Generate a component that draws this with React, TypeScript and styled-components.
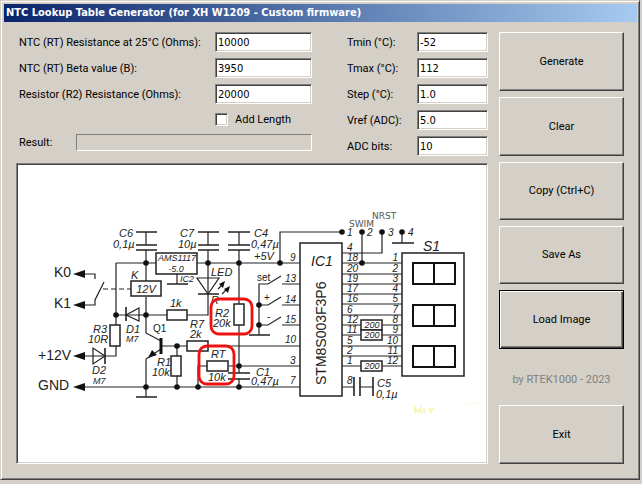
import React, { useState } from "react";
import styled, { createGlobalStyle, css } from "styled-components";

const face = "#d4d0c8";
const shadow = "#808080";
const dark = "#404040";

const GlobalStyle = createGlobalStyle`
  * { box-sizing: border-box; }
  body {
    margin: 0;
    background: ${face};
    font: 11px/14px Roboto, "Liberation Sans", sans-serif;
    color: #000;
  }
`;

const Window = styled.main`
  margin: 0 2px 4px 0;
  padding: 2px;
  background: ${face};
  border: 1px solid;
  border-color: ${face} ${dark} ${dark} ${face};
  box-shadow: inset 1px 1px #fff, inset -1px -1px ${shadow};
`;

const TitleBar = styled.h1`
  margin: 1px 0 0 1px;
  padding: 0 2px;
  height: 18px;
  font: bold 11px/18px "DejaVu Sans Condensed", "DejaVu Sans", sans-serif;
  color: #fff;
  white-space: nowrap;
  background: linear-gradient(90deg, #0a246a, #a6caf0);
`;

const Content = styled.div`
  display: flex;
  gap: 11px;
  padding: 10px 13px 13px;
`;

const Workspace = styled.div`
  flex: 1;
  min-width: 0;
  display: flex;
  flex-direction: column;
  gap: 7px;
`;

const Form = styled.form`
  display: flex;
  justify-content: space-between;
  padding-left: 3px;
`;

const Fields = styled.div<{ $width: number }>`
  width: ${(p) => p.$width}px;
  display: flex;
  flex-direction: column;
  gap: 6px;
`;

const Row = styled.div`
  display: flex;
  align-items: center;
  justify-content: space-between;
  height: 20px;
  white-space: nowrap;
`;

const Label = styled.label`
  line-height: 16px;
  padding-top: 1px;
`;

const sunken = css`
  border: 1px solid;
  border-color: ${shadow} #fff #fff ${shadow};
`;

const TextBox = styled.input<{ $width: number }>`
  ${sunken}
  width: ${(p) => p.$width}px;
  height: 20px;
  padding: 0 2px;
  font: 11px/14px "DejaVu Sans Condensed", "DejaVu Sans", sans-serif;
  background: #fff;
  border-radius: 0;
  outline: none;
  box-shadow: inset 1px 1px ${dark}, inset -1px -1px ${face};
`;

const CheckRow = styled(Row)`
  height: 18px;
  justify-content: flex-start;
  gap: 7px;
  padding-left: 196px;
`;

const ResultRow = styled(Row)`
  height: 17px;
`;

const CheckBox = styled.input`
  ${sunken}
  appearance: none;
  width: 13px;
  height: 13px;
  margin: 0;
  background: #fff;
  box-shadow: inset 1px 1px ${dark}, inset -1px -1px ${face};
  &:checked::after {
    content: "✓";
    display: block;
    font: bold 10px/10px "DejaVu Sans", sans-serif;
    text-align: center;
  }
`;

const ResultBox = styled.output`
  ${sunken}
  width: 236px;
  height: 17px;
`;

const Picture = styled.figure`
  ${sunken}
  margin: 0;
  padding: 1px;
  background: #fff;
  box-shadow: inset 1px 1px ${dark}, inset -1px -1px ${face};
`;

const Drawing = styled.svg`
  display: block;
  width: 100%;
  height: auto;
  fill: none;
  stroke: #222;
  stroke-width: 1.2;
  font: italic 11px "Liberation Sans", Arial, sans-serif;
  text { fill: #222; stroke: none; }
  .large { font-size: 14px; }
  .small { font-size: 10px; }
  .tiny { font-size: 9px; }
  .upright { font-style: normal; }
  .legend { font: 9px "DejaVu Sans", sans-serif; fill: #555; }
  .end { text-anchor: end; }
  .middle { text-anchor: middle; }
  .solid { fill: #111; stroke: none; }
  .heavy { stroke-width: 2; stroke: #111; }
`;

const Sidebar = styled.aside`
  width: 125px;
  display: flex;
  flex-direction: column;
  gap: 6px;
`;

const Button = styled.button<{ $short?: boolean; $default?: boolean }>`
  height: ${(p) => (p.$short ? 58 : 59)}px;
  padding: 0;
  font: inherit;
  color: #000;
  background: ${face};
  border: 1px solid;
  border-radius: 0;
  border-color: ${(p) => (p.$default ? "#000" : `#fff ${dark} ${dark} #fff`)};
  box-shadow: ${(p) =>
    p.$default
      ? `inset 1px 1px #fff, inset -1px -1px ${dark}, inset -2px -2px ${shadow}`
      : `inset -1px -1px ${shadow}`};
`;

const Credit = styled.p`
  flex: 1;
  margin: 0;
  padding-top: 18px;
  text-align: center;
  color: ${shadow};
`;

const leftPins = ["4", "18", "20", "19", "17", "16", "6", "12", "11", "5", "2", "1"];
const rightPins = ["1", "2", "3", "4", "5", "7", "8", "9", "10", "11", "12"];
const pinY = [253, 263, 274, 284, 294, 304, 315, 325, 335, 346, 356, 366];

const nodes: [number, number][] = [
  [146, 263], [208, 263], [239, 263], [280, 263], [116, 315], [146, 315],
  [177, 346], [146, 387], [177, 387], [198, 387], [239, 387], [239, 366],
  [259, 305], [259, 325], [342, 232], [362, 232], [382, 232], [402, 232], [362, 263],
];

function Schematic() {
  return (
    <Drawing viewBox="18 165 468 297" role="img" aria-label="Thermostat schematic">
      <path d="M116 263H156M197 263H300M116 263V325M116 346V356H84M116 315H167M187 315H208V263M146 250V281M146 297V333L161 341M161 349L146 359V397M84 387H300M161 346H187M208 346H300M177 346V356M177 376V387M198 387V366H207M229 366H300M239 250V304M239 325V373M239 379V387M208 250V263" />
      <path d="M146 232V245M208 232V245M239 232V245M280 263V232H342M362 232V263M342 253H382V232M402 232V243M177 274V284" />
      <path strokeWidth="1.6" d="M136 232H157M136 245H157M136 250H157M198 232H219M198 245H219M198 250H219M228 232H250M228 245H250M228 250H250M167 284H188M136 397H157M249 335H270M392 243H414M228 373H250M228 379H250M126 307V321M105 348V364M198 294H219M354 377V396M360 377V396M373 377V396" />
      <path d="M85 274H95V279M85 305H95V300L104 282M342 387H354M360 387H373" />
      <path strokeDasharray="5 3" d="M103 289H131" />
      <path d="M139 308V321L126 315ZM93 348V364L105 356ZM197 278H219L208 294Z" />
      <path d="M259 335V284H268L281 276M282 284H300M259 305H268L281 297M282 305H300M259 325H268L281 317M282 325H300" />
      <path d="M218 289L222 285M222 294L226 290" />
      <path className="solid" d="M73 274L85 270V278ZM73 305L85 301V309ZM73 356L85 352V360ZM73 387L85 383V391ZM225 281L223 288L219 284ZM230 286L228 293L224 289ZM148 358L152 350L157 355Z" />
      <path stroke="#111" strokeWidth="3" d="M161 338V354" />

      <g fill="#fff" strokeWidth="1.5">
        <rect x="156" y="253" width="41" height="21" />
        <rect x="131" y="281" width="30" height="15" />
        <rect x="167" y="310" width="20" height="10" />
        <rect x="187" y="341" width="21" height="10" />
        <rect x="207" y="361" width="21" height="10" />
        <rect x="110" y="325" width="10" height="21" />
        <rect x="171" y="356" width="10" height="20" />
        <rect x="234" y="304" width="10" height="21" />
        <rect x="300" y="243" width="42" height="153" />
        <rect x="402" y="253" width="62" height="123" />
      </g>

      {pinY.slice(1).map((y) => (
        <path key={y} d={`M342 ${y}H402`} />
      ))}
      {leftPins.map((pin, i) => (
        <text key={pin} className="small" x="347" y={pinY[i] - 2}>{pin}</text>
      ))}
      {rightPins.map((pin, i) => (
        <text key={pin} className="small end" x="398" y={pinY[i + 1] - 2}>{pin}</text>
      ))}
      {[320, 330, 361].map((y) => (
        <g key={y}>
          <rect x="361" y={y} width="21" height="10" fill="#fff" strokeWidth="1.5" />
          <text className="tiny middle" x="372" y={y + 8}>200</text>
        </g>
      ))}
      {[263, 305, 346].map((y) => (
        <path key={y} className="heavy" d={`M413 ${y}H455V${y + 21}H413ZM434 ${y}V${y + 21}`} />
      ))}
      {nodes.map(([x, y]) => (
        <circle key={`${x}-${y}`} className="solid" cx={x} cy={y} r="2.8" />
      ))}

      <text x="119" y="237">C6</text>
      <text x="113" y="248">0,1µ</text>
      <text x="180" y="237">C7</text>
      <text x="178" y="248">10µ</text>
      <text x="254" y="237">C4</text>
      <text x="251" y="248">0,47µ</text>
      <text x="254" y="260">+5V</text>
      <text className="tiny middle" x="177" y="261">AMS1117</text>
      <text className="tiny middle" x="176" y="272">-5.0</text>
      <text className="tiny" x="180" y="282">IC2</text>
      <text x="131" y="279">K</text>
      <text className="middle" x="146" y="293">12V</text>
      <text x="211" y="276">LED</text>
      <text x="211" y="304">R</text>
      <text x="170" y="307">1k</text>
      <text x="93" y="333">R3</text>
      <text x="88" y="343">10R</text>
      <text x="126" y="333">D1</text>
      <text className="tiny" x="126" y="342">M7</text>
      <text x="92" y="374">D2</text>
      <text className="tiny" x="93" y="384">M7</text>
      <text className="small upright" x="153" y="332">Q1</text>
      <text x="157" y="366">R1</text>
      <text x="152" y="376">10k</text>
      <text x="190" y="328">R7</text>
      <text x="190" y="338">2k</text>
      <text x="215" y="317">R2</text>
      <text x="213" y="327">20k</text>
      <text x="211" y="358">RT</text>
      <text x="208" y="381">10k</text>
      <text x="256" y="376">C1</text>
      <text x="251" y="385">0,47µ</text>
      <text className="small upright" x="257" y="281">set</text>
      <text className="small upright" x="264" y="301">+</text>
      <text className="small upright" x="267" y="320">-</text>
      <text className="small" x="285" y="282">13</text>
      <text className="small" x="285" y="303">14</text>
      <text className="small" x="285" y="323">15</text>
      <text className="small" x="290" y="261">9</text>
      <text className="small" x="285" y="343">10</text>
      <text className="small" x="290" y="364">3</text>
      <text className="small" x="290" y="384">7</text>
      <text className="small" x="347" y="384">8</text>
      <text x="377" y="387">C5</text>
      <text x="376" y="398">0,1µ</text>
      <text className="small" x="347" y="236">1</text>
      <text className="small" x="367" y="236">2</text>
      <text className="small" x="388" y="236">3</text>
      <text className="small" x="408" y="236">4</text>
      <text className="legend" x="372" y="219">NRST</text>
      <text className="legend" x="349" y="227">SWIM</text>
      <text className="large" x="311" y="266">IC1</text>
      <text className="large" x="423" y="251">S1</text>
      <text className="large upright" transform="translate(326 385) rotate(-90)">STM8S003F3P6</text>
      <text className="large upright" x="54" y="277">K0</text>
      <text className="large upright" x="54" y="308">K1</text>
      <text className="large upright" x="38" y="360">+12V</text>
      <text className="large upright" x="38" y="390">GND</text>

      <g stroke="#ee1111" strokeWidth="2.8">
        <rect x="211" y="299" width="41" height="35" rx="8" />
        <rect x="199" y="346" width="35" height="38" rx="8" />
      </g>
      <path stroke="#f8f6b4" strokeWidth="2" d="M415 413V408L418 412L421 408V413M424 408V413M429 408L431 411L434 408M431 411V413" />
      <path stroke="#fbf9d4" d="M467 404H470M472 402V404M475 403H479" />
    </Drawing>
  );
}

const ntcFields = [
  { id: "resistance", label: "NTC (RT) Resistance at 25°C (Ohms):", value: "10000" },
  { id: "beta", label: "NTC (RT) Beta value (B):", value: "3950" },
  { id: "resistor", label: "Resistor (R2) Resistance (Ohms):", value: "20000" },
];

const rangeFields = [
  { id: "tmin", label: "Tmin (°C):", value: "-52" },
  { id: "tmax", label: "Tmax (°C):", value: "112" },
  { id: "step", label: "Step (°C):", value: "1.0" },
  { id: "vref", label: "Vref (ADC):", value: "5.0" },
  { id: "bits", label: "ADC bits:", value: "10" },
];

export default function App() {
  const [addLength, setAddLength] = useState(false);
  return (
    <>
      <GlobalStyle />
      <Window>
        <TitleBar>NTC Lookup Table Generator (for XH W1209 - Custom firmware)</TitleBar>
        <Content>
          <Workspace>
            <Form>
              <Fields $width={293}>
                {ntcFields.map((f) => (
                  <Row key={f.id}>
                    <Label htmlFor={f.id}>{f.label}</Label>
                    <TextBox id={f.id} $width={97} defaultValue={f.value} />
                  </Row>
                ))}
                <CheckRow>
                  <CheckBox
                    id="length"
                    type="checkbox"
                    checked={addLength}
                    onChange={(e) => setAddLength(e.target.checked)}
                  />
                  <Label htmlFor="length">Add Length</Label>
                </CheckRow>
                <ResultRow>
                  <Label htmlFor="result">Result:</Label>
                  <ResultBox id="result" />
                </ResultRow>
              </Fields>
              <Fields $width={141}>
                {rangeFields.map((f) => (
                  <Row key={f.id}>
                    <Label htmlFor={f.id}>{f.label}</Label>
                    <TextBox id={f.id} $width={71} defaultValue={f.value} />
                  </Row>
                ))}
              </Fields>
            </Form>
            <Picture>
              <Schematic />
            </Picture>
          </Workspace>
          <Sidebar>
            <Button type="button">Generate</Button>
            <Button type="button">Clear</Button>
            <Button type="button" $short>Copy (Ctrl+C)</Button>
            <Button type="button" $short>Save As</Button>
            <Button type="button" $default>Load Image</Button>
            <Credit>by RTEK1000 - 2023</Credit>
            <Button type="button">Exit</Button>
          </Sidebar>
        </Content>
      </Window>
    </>
  );
}
